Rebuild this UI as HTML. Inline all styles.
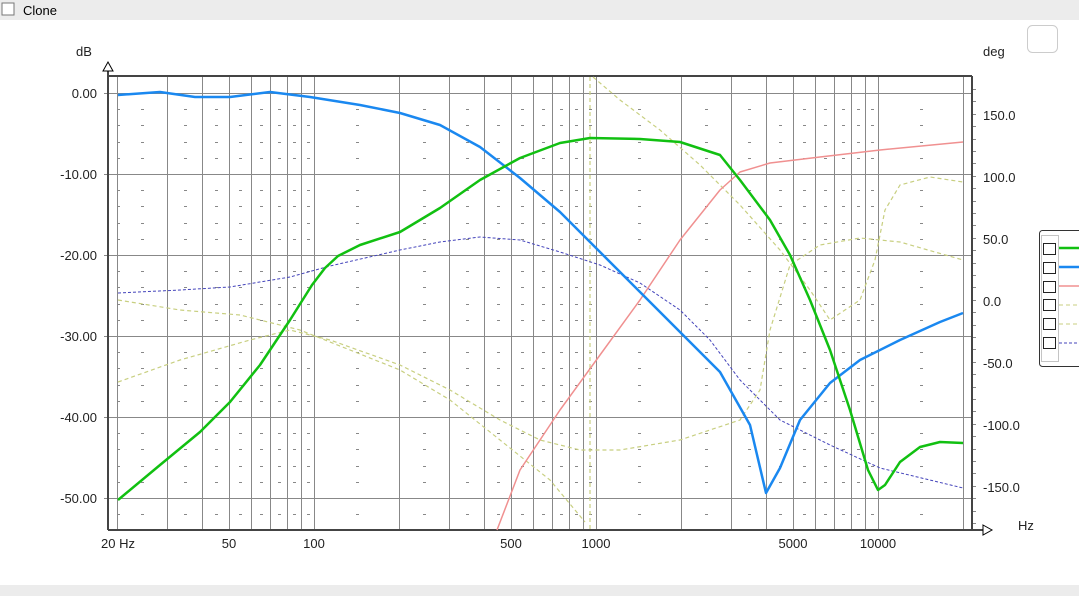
<!DOCTYPE html>
<html><head><meta charset="utf-8"><style>
html,body{margin:0;padding:0;width:1079px;height:596px;background:#fff;overflow:hidden;font-family:"Liberation Sans",sans-serif}
</style></head><body>
<svg id="s" width="1079" height="596" viewBox="0 0 1079 596" xmlns="http://www.w3.org/2000/svg" font-family="Liberation Sans, sans-serif">
<rect x="0" y="0" width="1079" height="20" fill="#ececec"/>
<rect x="0" y="585" width="1079" height="11" fill="#ececec"/>
<rect x="2" y="3" width="12" height="12" fill="#fff" stroke="#777"/>
<text x="23" y="15" font-size="13" fill="#000">Clone</text>
<rect x="1027.5" y="25.5" width="30" height="27" rx="5" fill="#fff" stroke="#ccc"/>
<text x="76" y="56" font-size="13" fill="#222">dB</text>
<text x="983" y="56" font-size="13" fill="#222">deg</text>
<g stroke="#888" stroke-width="1">
<line x1="117.5" y1="77" x2="117.5" y2="529"/><line x1="167.5" y1="77" x2="167.5" y2="529"/><line x1="202.5" y1="77" x2="202.5" y2="529"/><line x1="229.5" y1="77" x2="229.5" y2="529"/><line x1="251.5" y1="77" x2="251.5" y2="529"/><line x1="270.5" y1="77" x2="270.5" y2="529"/><line x1="287.5" y1="77" x2="287.5" y2="529"/><line x1="301.5" y1="77" x2="301.5" y2="529"/><line x1="314.5" y1="77" x2="314.5" y2="529"/>
<line x1="399.5" y1="77" x2="399.5" y2="529"/><line x1="449.5" y1="77" x2="449.5" y2="529"/><line x1="484.5" y1="77" x2="484.5" y2="529"/><line x1="511.5" y1="77" x2="511.5" y2="529"/><line x1="533.5" y1="77" x2="533.5" y2="529"/><line x1="552.5" y1="77" x2="552.5" y2="529"/><line x1="569.5" y1="77" x2="569.5" y2="529"/><line x1="583.5" y1="77" x2="583.5" y2="529"/><line x1="596.5" y1="77" x2="596.5" y2="529"/>
<line x1="681.5" y1="77" x2="681.5" y2="529"/><line x1="731.5" y1="77" x2="731.5" y2="529"/><line x1="766.5" y1="77" x2="766.5" y2="529"/><line x1="793.5" y1="77" x2="793.5" y2="529"/><line x1="815.5" y1="77" x2="815.5" y2="529"/><line x1="834.5" y1="77" x2="834.5" y2="529"/><line x1="851.5" y1="77" x2="851.5" y2="529"/><line x1="865.5" y1="77" x2="865.5" y2="529"/><line x1="878.5" y1="77" x2="878.5" y2="529"/><line x1="963.5" y1="77" x2="963.5" y2="529"/>
<line x1="104" y1="93.5" x2="972" y2="93.5"/><line x1="104" y1="174.5" x2="972" y2="174.5"/><line x1="104" y1="255.5" x2="972" y2="255.5"/><line x1="104" y1="336.5" x2="972" y2="336.5"/><line x1="104" y1="417.5" x2="972" y2="417.5"/><line x1="104" y1="498.5" x2="972" y2="498.5"/>
</g>
<g id="dash" stroke="#888" stroke-width="1"></g>
<g stroke="#444" stroke-width="2" fill="none">
<line x1="108" y1="76" x2="972" y2="76"/>
<line x1="108" y1="66" x2="108" y2="530"/>
<line x1="108" y1="530" x2="990" y2="530"/>
<line x1="972" y1="76" x2="972" y2="530"/>
</g>
<path d="M103 71 L108 62 L113 71 Z" fill="#fff" stroke="#000"/>
<path d="M983 525 L992 530 L983 535 Z" fill="#fff" stroke="#000"/>
<g font-size="13" fill="#222" text-anchor="end">
<text x="97" y="98">0.00</text><text x="97" y="179">-10.00</text><text x="97" y="260">-20.00</text><text x="97" y="341">-30.00</text><text x="97" y="422">-40.00</text><text x="97" y="503">-50.00</text>
</g>
<g font-size="13" fill="#222">
<text x="983" y="120">150.0</text><text x="983" y="182">100.0</text><text x="983" y="244">50.0</text><text x="983" y="306">0.0</text><text x="983" y="368">-50.0</text><text x="983" y="430">-100.0</text><text x="983" y="492">-150.0</text>
<text x="1018" y="530">Hz</text>
</g>
<g font-size="13" fill="#222" text-anchor="middle">
<text x="118" y="548">20 Hz</text><text x="229" y="548">50</text><text x="314" y="548">100</text><text x="511" y="548">500</text><text x="596" y="548">1000</text><text x="793" y="548">5000</text><text x="878" y="548">10000</text>
</g>
<g fill="none" stroke-linejoin="round">
<path stroke="#c8cf80" stroke-width="1.2" stroke-dasharray="4 3" d="M118 382 L180 360 L250 340 L290 330 L330 340 L400 365 L450 390 L500 420 L540 440 L580 450 L620 450 L680 440 L740 420 L760 390 L770 330 L790 265 L820 245 L860 238 L900 242 L963 260"/>
<path stroke="#c8cf80" stroke-width="1.2" stroke-dasharray="4 3" d="M118 300 L180 310 L240 315 L300 330 L350 350 L400 370 L450 400 L500 440 L550 480 L585 522 M593 77 L620 100 L660 130 L700 165 L740 205 L780 250 L810 290 L830 320 L860 300 L875 260 L885 210 L900 185 L930 177 L963 182"/>
<line x1="590" y1="77" x2="590" y2="529" stroke="#c8cf80" stroke-width="1.2" stroke-dasharray="4 3"/>
<path stroke="#4444bb" stroke-width="1" stroke-dasharray="3 2" d="M118 293 L180 290 L230 287 L290 277 L330 266 L400 250 L440 242 L480 237 L520 240 L560 252 L600 265 L640 283 L680 310 L710 340 L740 380 L780 420 L830 445 L880 468 L963 488"/>
<path stroke="#f09090" stroke-width="1.5" d="M497 530 L520 470 L560 410 L600 355 L640 300 L680 240 L720 190 L740 172 L770 163 L820 157 L880 150 L963 142"/>
<path stroke="#1a88f0" stroke-width="2.5" d="M118 95 L160 92 L195 97 L230 97 L270 92 L310 97 L360 105 L400 113 L440 125 L480 147 L520 178 L560 212 L600 252 L640 292 L680 332 L720 372 L750 425 L766 493 L780 468 L800 420 L830 383 L860 360 L900 340 L940 322 L963 313"/>
<path stroke="#11c011" stroke-width="2.5" d="M118 500 L160 465 L200 432 L230 402 L260 365 L290 320 L312 285 L325 268 L338 256 L360 245 L400 232 L440 208 L480 180 L520 158 L560 143 L590 138 L640 139 L680 142 L720 155 L740 180 L770 220 L790 255 L810 300 L830 350 L850 410 L868 470 L878 490 L885 485 L900 462 L920 447 L940 442 L963 443"/>
</g>
<rect x="1039.5" y="230.5" width="45" height="136" rx="3" fill="#fff" stroke="#333"/>
<rect x="1041.5" y="235.5" width="17" height="126" fill="none" stroke="#888" stroke-dasharray="1 1"/>
<g fill="#fff" stroke="#222">
<rect x="1043.5" y="243.5" width="12" height="11"/><rect x="1043.5" y="262.5" width="12" height="11"/><rect x="1043.5" y="281.5" width="12" height="11"/><rect x="1043.5" y="299.5" width="12" height="11"/><rect x="1043.5" y="318.5" width="12" height="11"/><rect x="1043.5" y="337.5" width="12" height="11"/>
</g>
<g fill="none">
<line x1="1059" y1="248" x2="1079" y2="248" stroke="#11c011" stroke-width="2.5"/>
<line x1="1059" y1="267" x2="1079" y2="267" stroke="#1a88f0" stroke-width="2.5"/>
<line x1="1059" y1="286" x2="1079" y2="286" stroke="#f09090" stroke-width="1.5"/>
<line x1="1059" y1="305" x2="1079" y2="305" stroke="#c8cf80" stroke-dasharray="4 3"/>
<line x1="1059" y1="324" x2="1079" y2="324" stroke="#c8cf80" stroke-dasharray="4 3"/>
<line x1="1059" y1="343" x2="1079" y2="343" stroke="#4444bb" stroke-dasharray="3 2"/>
</g>
</svg>
<script>
(function(){
var xs=[117,167,202,229,251,270,287,301,314,399,449,484,511,533,552,569,583,596,681,731,766,793,815,834,851,865,878,963];
var cx=[118];for(var i=0;i<xs.length-1;i++)cx.push(Math.round((xs[i]+xs[i+1])/2));
var majors=[93,174,255,336,417,498];var ys=[];
for(var m=0;m<6;m++){for(var k=1;k<5;k++)ys.push(majors[m]+Math.round(k*16.2));}
ys.push(514);var d="";
ys.forEach(function(y){if(y>528)return;cx.forEach(function(x){d+="M"+(x-1)+" "+(y+0.5)+"h3";});});
// right axis ticks
for(var y=89;y<528;y+=12.4){d+="M972 "+(Math.round(y)+0.5)+"h4";}
var p=document.createElementNS("http://www.w3.org/2000/svg","path");p.setAttribute("d",d);
document.getElementById("dash").appendChild(p);
})();
</script>
</body></html>
